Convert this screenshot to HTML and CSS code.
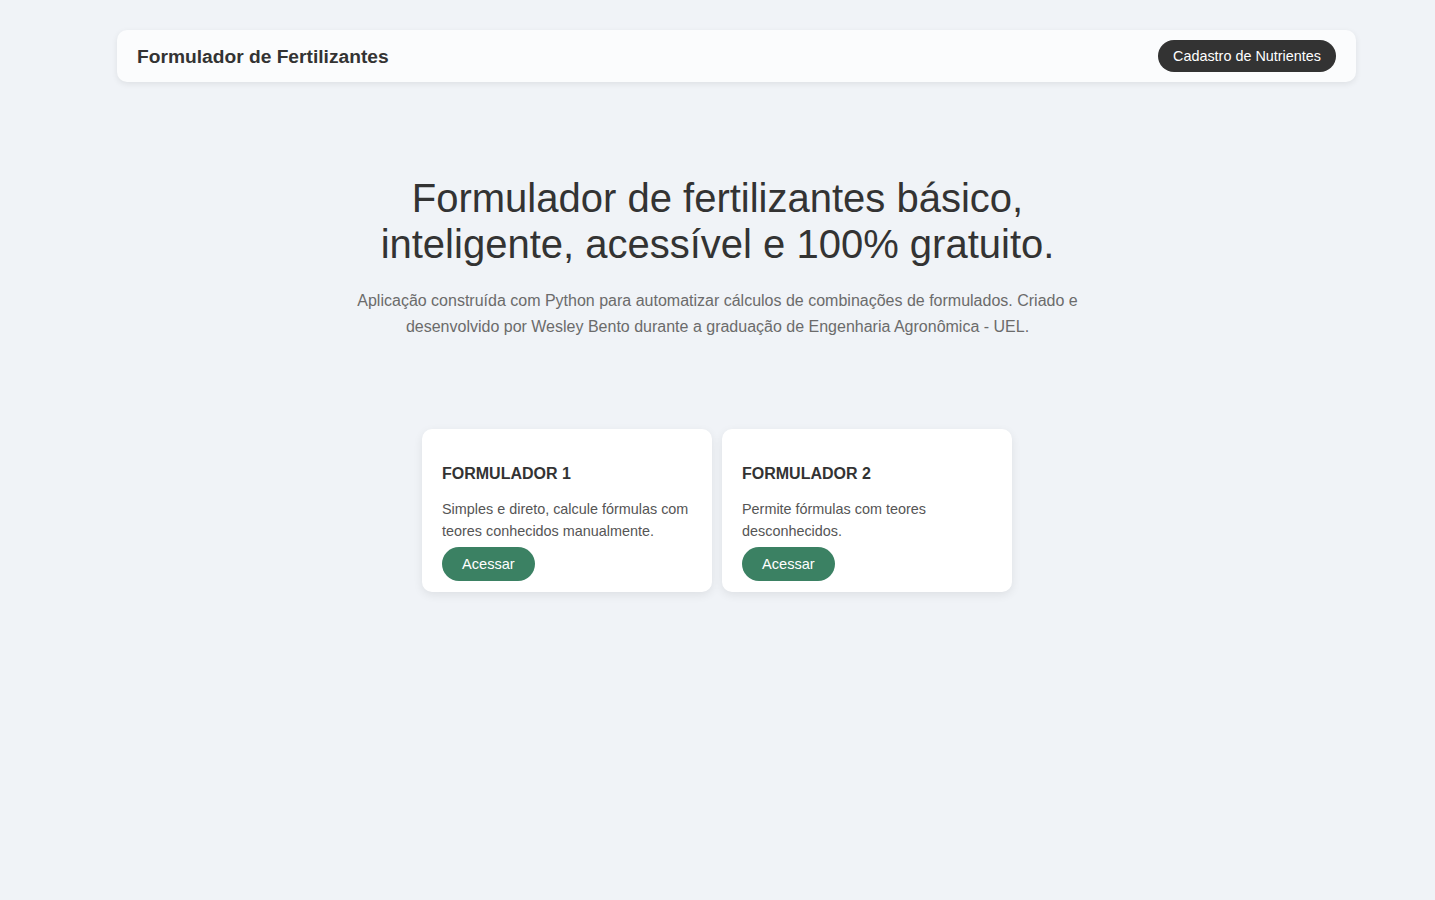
FILE: index.html
```html
<!DOCTYPE html>
<html lang="pt-BR">
<head>
<meta charset="utf-8">
<title>Formulador de Fertilizantes</title>
<link rel="stylesheet" href="styles.css">
</head>
<body>
<header class="topbar">
  <span class="brand">Formulador de Fertilizantes</span>
  <a class="nav-btn" href="#">Cadastro de Nutrientes</a>
</header>
<main>
  <section class="hero">
    <h1 class="hero-title">Formulador de fertilizantes básico,<br>inteligente, acessível e 100% gratuito.</h1>
    <p class="hero-text">Aplicação construída com Python para automatizar cálculos de combinações de formulados. Criado e desenvolvido por Wesley Bento durante a graduação de Engenharia Agronômica - UEL.</p>
  </section>
  <section class="cards">
    <div class="card">
      <h3 class="card-title">FORMULADOR 1</h3>
      <p class="card-text">Simples e direto, calcule fórmulas com teores conhecidos manualmente.</p>
      <a class="card-btn" href="#">Acessar</a>
    </div>
    <div class="card">
      <h3 class="card-title">FORMULADOR 2</h3>
      <p class="card-text">Permite fórmulas com teores desconhecidos.</p>
      <a class="card-btn" href="#">Acessar</a>
    </div>
  </section>
</main>
</body>
</html>
```
FILE: styles.css
```css
* { box-sizing: border-box; }
html, body { margin: 0; padding: 0; }
body {
  background: #f0f3f7;
  font-family: "Liberation Sans", Arial, sans-serif;
  color: #333;
  min-height: 900px;
}
.topbar {
  margin: 30px 79px 0 117px;
  height: 52px;
  background: #fbfcfd;
  border-radius: 10px;
  box-shadow: 0 2px 6px rgba(0,0,0,0.08);
  display: flex;
  align-items: center;
  justify-content: space-between;
  padding: 0 20px;
}
.brand {
  font-size: 19.2px;
  font-weight: bold;
  color: #333;
  padding-top: 2px;
}
.nav-btn {
  background: #333;
  color: #fff;
  text-decoration: none;
  font-size: 14.4px;
  height: 32px;
  line-height: 32px;
  padding: 0 15px;
  border-radius: 16px;
}
.hero {
  text-align: center;
  margin-top: 93px;
}
.hero-title {
  font-size: 40px;
  font-weight: normal;
  line-height: 46px;
  margin: 0;
  color: #333;
}
.hero-text {
  width: 740px;
  margin: 21px auto 0;
  font-size: 16px;
  line-height: 26px;
  color: #6b6b6b;
}
.cards {
  display: flex;
  justify-content: center;
  gap: 10px;
  margin-top: 89px;
  padding-right: 1px;
}
.card {
  width: 290px;
  height: 163px;
  background: #fff;
  border-radius: 10px;
  box-shadow: 0 3px 10px rgba(0,0,0,0.08);
  padding: 34px 20px 10px;
}
.card-title {
  margin: 0;
  font-size: 16px;
  line-height: 22px;
  font-weight: bold;
  color: #333;
}
.card-text {
  margin: 14px 0 5px;
  font-size: 14.4px;
  line-height: 21.6px;
  color: #555;
}
.card-btn {
  display: inline-block;
  background: #3b8163;
  color: #fff;
  text-decoration: none;
  font-size: 14.6px;
  height: 34px;
  line-height: 34px;
  padding: 0 20px;
  border-radius: 17px;
}
```
